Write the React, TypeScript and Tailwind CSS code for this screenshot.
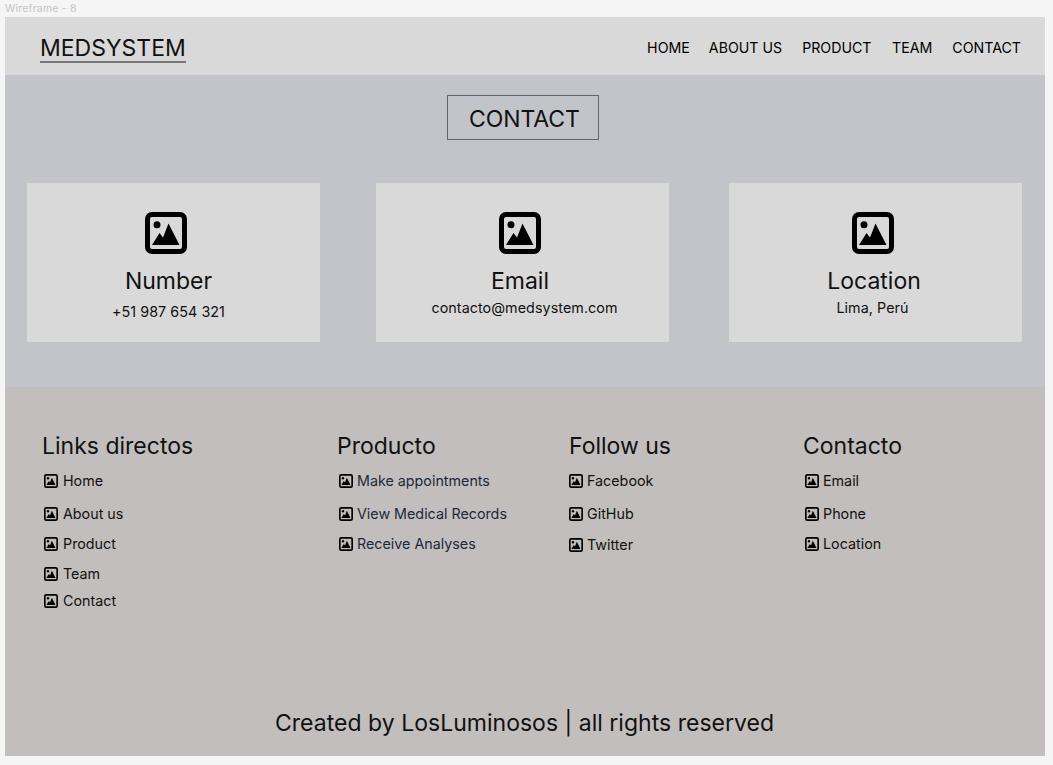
const font = { fontFamily: "Inter, sans-serif" };

function Pic({ className }: { className: string }) {
  return (
    <svg viewBox="0 0 42 42" className={className} aria-hidden="true">
      <rect x="2.5" y="2.5" width="37" height="37" rx="4.5" fill="none" stroke="#000" strokeWidth="5" />
      <circle cx="12" cy="12.7" r="3.5" fill="#000" />
      <path d="M7 33 L14.5 21 L18 25.5 L23.5 11.5 L34.5 33 Z" fill="#000" />
    </svg>
  );
}

function Row({ label, className, dark, gap }: { label: string; className: string; dark?: boolean; gap?: string }) {
  return (
    <div className={`flex items-center h-5 ${className}`}>
      <Pic className="w-[14px] h-[14px] shrink-0" />
      <span className={`${gap ?? "ml-[4px]"} text-[14.3px] leading-5 ${dark ? "text-[#1e293b]" : "text-[#111]"}`}>{label}</span>
    </div>
  );
}

function Card({ title, sub, className, iconClass, titleClass, subClass }: { title: string; sub: string; className: string; iconClass: string; titleClass: string; subClass: string }) {
  return (
    <div className={`w-[293px] h-[159px] bg-[#d9d9d9] flex flex-col items-center pt-[29px] ${className}`}>
      <div className={iconClass}>
        <Pic className="w-[42px] h-[42px]" />
      </div>
      <div className={`text-[23px] leading-[29px] mt-[13px] text-[#111] ${titleClass}`}>{title}</div>
      <div className={`text-[14.3px] leading-5 tracking-[0.07px] text-[#111] ${subClass}`}>{sub}</div>
    </div>
  );
}

const heading = "text-[23px] leading-[30px] font-normal text-[#111]";

export default function App() {
  return (
    <div className="w-[1053px] h-[765px] bg-[#f5f5f5] overflow-hidden" style={font}>
      <div className="h-[17px] pl-[5px] pt-px text-[10.5px] leading-[16px] text-[#c4c4c4] tracking-[0.2px]">Wireframe - 8</div>
      <div className="mx-[5px] w-[1040px] h-[739px] flex flex-col">
        <header className="h-[58px] bg-[#d9d9d9] flex items-center justify-between pl-[35px] pr-[24px]">
          <div className="text-[23px] leading-[26px] text-[#111] border-b-2 border-[#777] mt-[6px]">MEDSYSTEM</div>
          <nav className="flex text-[14.2px] leading-5 text-black mt-[3px]">
            <span>HOME</span>
            <span className="ml-[19px]">ABOUT US</span>
            <span className="ml-[20px]">PRODUCT</span>
            <span className="ml-[20.5px]">TEAM</span>
            <span className="ml-[20px]">CONTACT</span>
          </nav>
        </header>
        <main className="h-[312px] bg-[#c3c4ca] pt-[20px]">
          <div className="ml-[442px] w-[152px] h-[45px] border border-[#666] flex items-center pl-[21px] pt-[4px] text-[23px] tracking-[-0.1px] text-[#111]">CONTACT</div>
          <div className="flex mt-[43px] pl-[22px]">
            <Card title="Number" sub="+51 987 654 321" className="" iconClass="pr-[15px]" titleClass="pr-[10px]" subClass="mt-[6px] pr-[10px]" />
            <Card title="Email" sub="contacto@medsystem.com" className="ml-[56px]" iconClass="pr-[6px]" titleClass="pr-[5px]" subClass="mt-[2px] pl-[4px]" />
            <Card title="Location" sub="Lima, Perú" className="ml-[60px]" iconClass="pr-[5px]" titleClass="pr-[3px]" subClass="mt-[2px] pr-[6px]" />
          </div>
        </main>
        <footer className="flex-1 bg-[#c2bebd] flex flex-col pt-[44px] pl-[37px]">
          <div className="grid grid-cols-[295px_232px_234px_1fr] h-[260px]">
            <div>
              <h3 className={heading}>Links directos</h3>
              <div className="pl-[2px]">
                <Row gap="ml-[5px]" label="Home" className="mt-[10px]" />
                <Row gap="ml-[5px]" label="About us" className="mt-[13px]" />
                <Row gap="ml-[5px]" label="Product" className="mt-[10px]" />
                <Row gap="ml-[5px]" label="Team" className="mt-[10px]" />
                <Row gap="ml-[5px]" label="Contact" className="mt-[7px]" />
              </div>
            </div>
            <div>
              <h3 className={heading}>Producto</h3>
              <div className="pl-[2px]">
                <Row dark label="Make appointments" className="mt-[10px]" />
                <Row dark label="View Medical Records" className="mt-[13px]" />
                <Row dark label="Receive Analyses" className="mt-[10px]" />
              </div>
            </div>
            <div>
              <h3 className={heading}>Follow us</h3>
              <Row label="Facebook" className="mt-[10px]" />
              <Row label="GitHub" className="mt-[13px]" />
              <Row label="Twitter" className="mt-[11px]" />
            </div>
            <div>
              <h3 className={heading}>Contacto</h3>
              <div className="pl-[2px]">
                <Row label="Email" className="mt-[10px]" />
                <Row label="Phone" className="mt-[13px]" />
                <Row label="Location" className="mt-[10px]" />
              </div>
            </div>
          </div>
          <div className="ml-[233px] mt-[18px] text-[23px] leading-[29px] tracking-[0.02px] text-[#111]">Created by LosLuminosos | all rights reserved</div>
        </footer>
      </div>
    </div>
  );
}
